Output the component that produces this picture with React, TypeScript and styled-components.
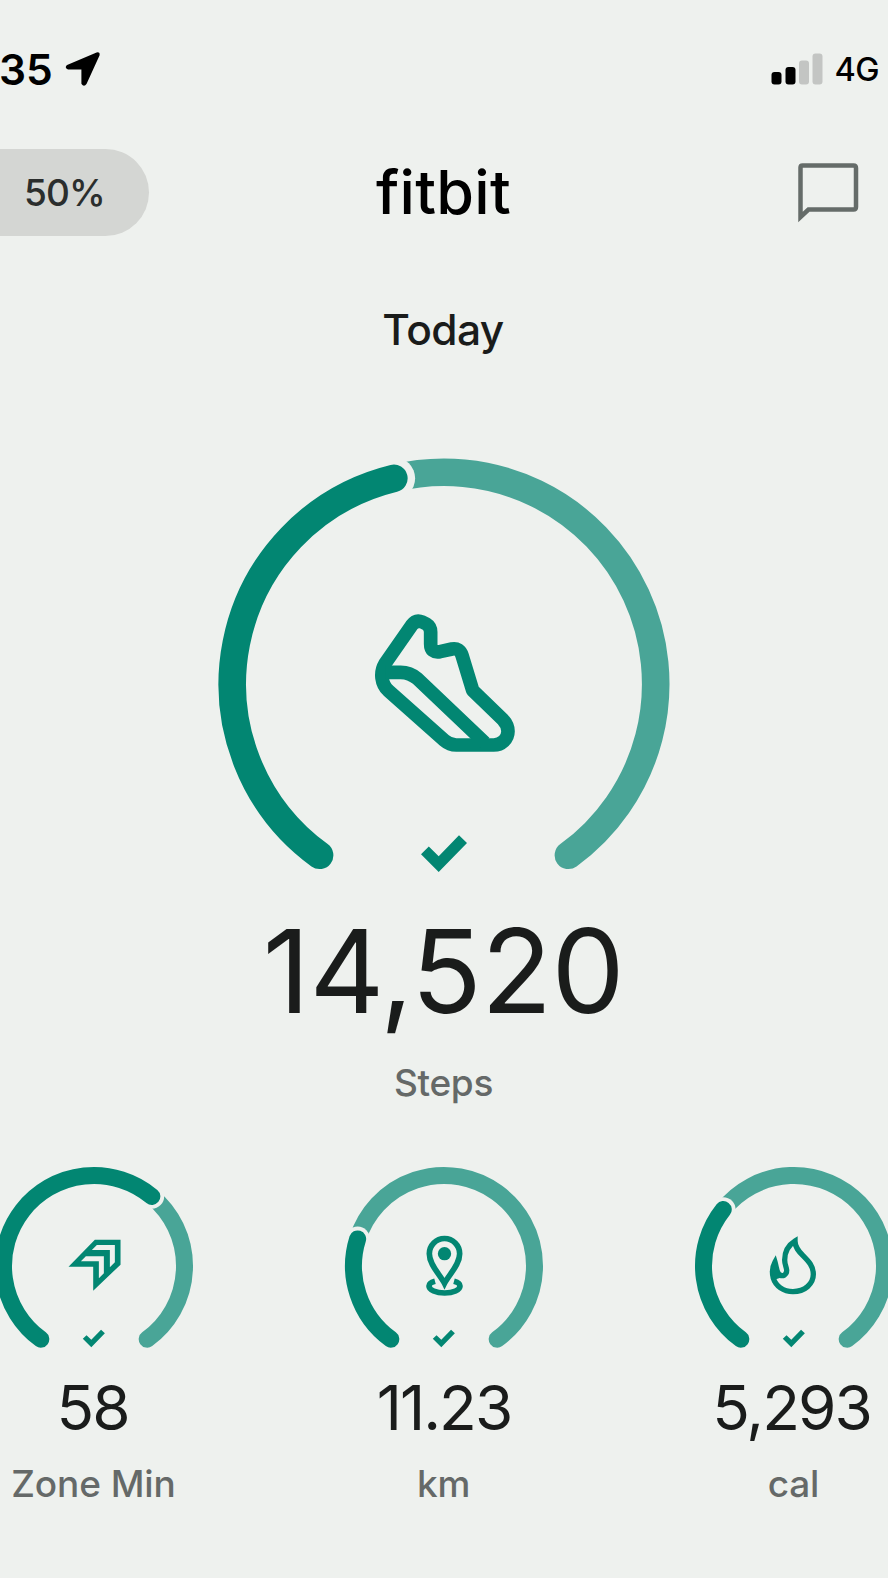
import React from "react";
import styled, { createGlobalStyle } from "styled-components";

const GlobalStyle = createGlobalStyle`
  body {
    margin: 0;
    background: #eef1ee;
  }
`;

const ACCENT = "#028672";
const ACCENT_SOFT = "#49a597";
const SURFACE = "#eef1ee";

const Screen = styled.main`
  display: flex;
  flex-direction: column;
  width: 888px;
  height: 1578px;
  overflow: hidden;
  background: ${SURFACE};
  color: #1a1c1b;
  font-family: Inter, "Liberation Sans", sans-serif;
`;

const StatusBar = styled.div`
  display: flex;
  align-items: center;
  justify-content: space-between;
  height: 138px;
  padding-right: 9px;
  color: #000;
`;

const StatusGroup = styled.div<{ $gap: number }>`
  display: flex;
  align-items: center;
  gap: ${(p) => p.$gap}px;
`;

const Clock = styled.span`
  margin-left: -1px;
  font-size: 42.5px;
  font-weight: 600;
  letter-spacing: 0;
`;

const Network = styled.span`
  font-size: 32.5px;
  font-weight: 500;
  letter-spacing: -0.5px;
`;

const Header = styled.header`
  display: grid;
  grid-template-columns: 1fr auto 1fr;
  align-items: center;
  height: 88px;
  margin-top: 10px;
  padding-right: 29px;
`;

const BatteryPill = styled.div`
  box-sizing: border-box;
  width: 149px;
  height: 87px;
  margin-right: -29px;
  padding-left: 24px;
  border-radius: 0 44px 44px 0;
  background: #d4d6d3;
  color: #2b2e2d;
  font-size: 37px;
  font-weight: 500;
  line-height: 87px;
  letter-spacing: -0.9px;
`;

const Brand = styled.h1`
  margin: 0 -29px 0 0;
  padding-right: 1px;
  color: #000;
  font-size: 61px;
  font-weight: 500;
  line-height: 89px;
  letter-spacing: 0.3px;
`;

const ChatIcon = styled.svg`
  justify-self: end;
`;

const DayTitle = styled.h2`
  margin: 63.5px 2px 0 0;
  text-align: center;
  font-size: 42.5px;
  font-weight: 500;
  line-height: 60px;
  letter-spacing: -0.6px;
`;

const Hero = styled.section`
  display: flex;
  flex-direction: column;
  align-items: center;
  margin-top: 98px;
`;

const HeroValue = styled.div`
  margin-top: 37.5px;
  padding-right: 1px;
  font-size: 116px;
  font-weight: 400;
  line-height: 120px;
  letter-spacing: -0.5px;
`;

const Label = styled.div<{ $top: number; $spacing?: number }>`
  margin-top: ${(p) => p.$top}px;
  padding-right: 1px;
  color: #656968;
  font-size: 37px;
  font-weight: 500;
  line-height: 50px;
  letter-spacing: ${(p) => p.$spacing ?? -0.3}px;
`;

const StatRow = styled.section`
  display: grid;
  grid-template-columns: repeat(3, 350px);
  justify-content: center;
  margin-top: 57.5px;
`;

const Stat = styled.div`
  display: flex;
  flex-direction: column;
  align-items: center;
`;

const StatValue = styled.div<{ $spacing: number; $shift: number }>`
  margin-top: 23px;
  padding-right: ${(p) => p.$shift}px;
  font-size: 62px;
  font-weight: 400;
  line-height: 70px;
  letter-spacing: ${(p) => p.$spacing}px;
`;

const GaugeSvg = styled.svg`
  display: block;
  flex: none;
`;

const START = -144;
const SWEEP = 288;

const point = (deg: number, r: number) => {
  const a = (deg * Math.PI) / 180;
  return { x: r * Math.sin(a), y: -r * Math.cos(a) };
};

const arc = (from: number, to: number, r: number) => {
  const a = point(from, r);
  const b = point(to, r);
  return `M${a.x} ${a.y}A${r} ${r} 0 ${to - from > 180 ? 1 : 0} 1 ${b.x} ${b.y}`;
};

interface GaugeProps {
  size: number;
  height: number;
  radius: number;
  thickness: number;
  gap: number;
  progress: number;
  checkScale: number;
  checkY: number;
  children: React.ReactNode;
}

function Gauge(p: GaugeProps) {
  const end = START + SWEEP * p.progress;
  const cap = point(end, p.radius);
  return (
    <GaugeSvg
      width={p.size}
      height={p.height}
      viewBox={`${-p.size / 2} ${-p.size / 2} ${p.size} ${p.height}`}
      fill="none"
    >
      <path d={arc(end, START + SWEEP, p.radius)} stroke={ACCENT_SOFT} strokeWidth={p.thickness} strokeLinecap="round" />
      <circle cx={cap.x} cy={cap.y} r={p.gap} fill={SURFACE} />
      <path d={arc(START, end, p.radius)} stroke={ACCENT} strokeWidth={p.thickness} strokeLinecap="round" />
      <path
        transform={`translate(-0.3 ${p.checkY}) scale(${p.checkScale})`}
        d="M-22.7 0.7L-14.9-7L-5 2.7L15.3-18.3L23.3-10.7L-5 18.3Z"
        fill={ACCENT}
      />
      {p.children}
    </GaugeSvg>
  );
}

const ShoeIcon = () => (
  <g transform="translate(-84 -84) scale(.33333)" stroke={ACCENT} strokeWidth="41" strokeLinejoin="round">
    <path d="M155 76Q168 58 187 66L199 72Q212 80 212 96V132Q212 160 240 155L276 147Q299 143 306 166L338 271L428 358Q444 375 444 394C444 417 425 435 401 435H289Q269 435 253 421L85 272C64 252 59 218 75 191Z" />
    <path d="M76 217H122Q150 217 172 236L374 428" />
  </g>
);

const ZoneIcon = () => (
  <path
    transform="translate(-93.8 -116) scale(.33333)"
    fill={ACCENT}
    fillRule="evenodd"
    d="M205 350L284 269H361V344L279 422V350ZM290 285L275 300H329V352L344 337V285ZM257 319L242 334H296V385L311 370V319Z"
  />
);

const PinIcon = () => (
  <g transform="translate(-114 -116) scale(.33333)" stroke={ACCENT} strokeWidth="17">
    <path d="M343.500 400C330 373 298 345 298 311A45.500 45.500 0 0 1 389 311C389 345 357 373 343.500 400Z" />
    <circle cx="343.500" cy="311" r="20" fill={ACCENT} stroke="none" />
    <path d="M315 394C304 397 297 402 297 408C297 420 318 429 344 429C370 429 390 420 390 408C390 402 383 397 372 394" />
  </g>
);

const FlameIcon = () => (
  <g transform="translate(-124 -116) scale(.33333)">
    <path
      stroke={ACCENT}
      strokeWidth="16"
      d="M375 273C354 286 344 306 344 330C344 345 350 352 350 361C350 376 338 379 330 375C319 369 320 353 315 336C306 352 306 370 310 385C317 408 340 425 369 425C404 425 430 402 430 373C430 348 416 334 399 317C386 304 375 292 375 273Z"
    />
    <path d="M315 334L305 362L311 390L336 382L322 362Z" fill={ACCENT} />
  </g>
);

const stats = [
  { value: "58", label: "Zone Min", progress: 0.638, icon: <ZoneIcon />, spacing: -2, shift: 3, labelSpacing: -0.1 },
  { value: "11.23", label: "km", progress: 0.248, icon: <PinIcon />, spacing: -2, shift: 0, labelSpacing: -0.2 },
  { value: "5,293", label: "cal", progress: 0.3215, icon: <FlameIcon />, spacing: -2, shift: 5, labelSpacing: -0.2 },
];

export default function App() {
  return (
    <Screen>
      <GlobalStyle />
      <StatusBar>
        <StatusGroup $gap={11}>
          <Clock>35</Clock>
          <svg width="36" height="36" viewBox="0 0 36 36">
            <path d="M33 2.500L3.500 15Q2 16.500 4 17.300H17.500Q18.500 17.300 18.500 18.500V32.500Q20 35 21.500 32.500L34.500 4Q35 1.800 33 2.500Z" fill="#000" stroke="#000" strokeWidth="2.200" strokeLinejoin="round" />
          </svg>
        </StatusGroup>
        <StatusGroup $gap={11}>
          <svg width="52" height="32" viewBox="0 0 52 32">
            <rect x="0.500" y="19" width="10" height="12.500" rx="3" fill="#000" />
            <rect x="14.500" y="14" width="10" height="17.500" rx="3" fill="#000" />
            <rect x="28" y="7.500" width="10" height="24" rx="3" fill="#c3c5c3" />
            <rect x="41.500" y="0.500" width="10" height="31" rx="3" fill="#c3c5c3" />
          </svg>
          <Network>4G</Network>
        </StatusGroup>
      </StatusBar>
      <Header>
        <BatteryPill>50%</BatteryPill>
        <Brand>fitbit</Brand>
        <ChatIcon width="61" height="60" viewBox="0 0 61 60" fill="none">
          <path d="M2.500 54V4.500Q2.500 2.500 4.500 2.500H55.500Q58 2.500 58 5V44Q58 46.500 55.500 46.500H10.500Z" stroke="#656c69" strokeWidth="4.500" strokeLinejoin="miter" />
        </ChatIcon>
      </Header>
      <DayTitle>Today</DayTitle>
      <Hero>
        <Gauge size={452} height={416} radius={211.7} thickness={27.6} gap={21.3} progress={0.4524} checkScale={1} checkY={169.600}>
          <ShoeIcon />
        </Gauge>
        <HeroValue>14,520</HeroValue>
        <Label $top={27}>Steps</Label>
      </Hero>
      <StatRow>
        {stats.map((s) => (
          <Stat key={s.label}>
            <Gauge size={200} height={184} radius={90.500} thickness={17} gap={12.300} progress={s.progress} checkScale={0.480} checkY={72.5}>
              {s.icon}
            </Gauge>
            <StatValue $spacing={s.spacing} $shift={s.shift}>{s.value}</StatValue>
            <Label $top={16} $spacing={s.labelSpacing}>{s.label}</Label>
          </Stat>
        ))}
      </StatRow>
    </Screen>
  );
}
